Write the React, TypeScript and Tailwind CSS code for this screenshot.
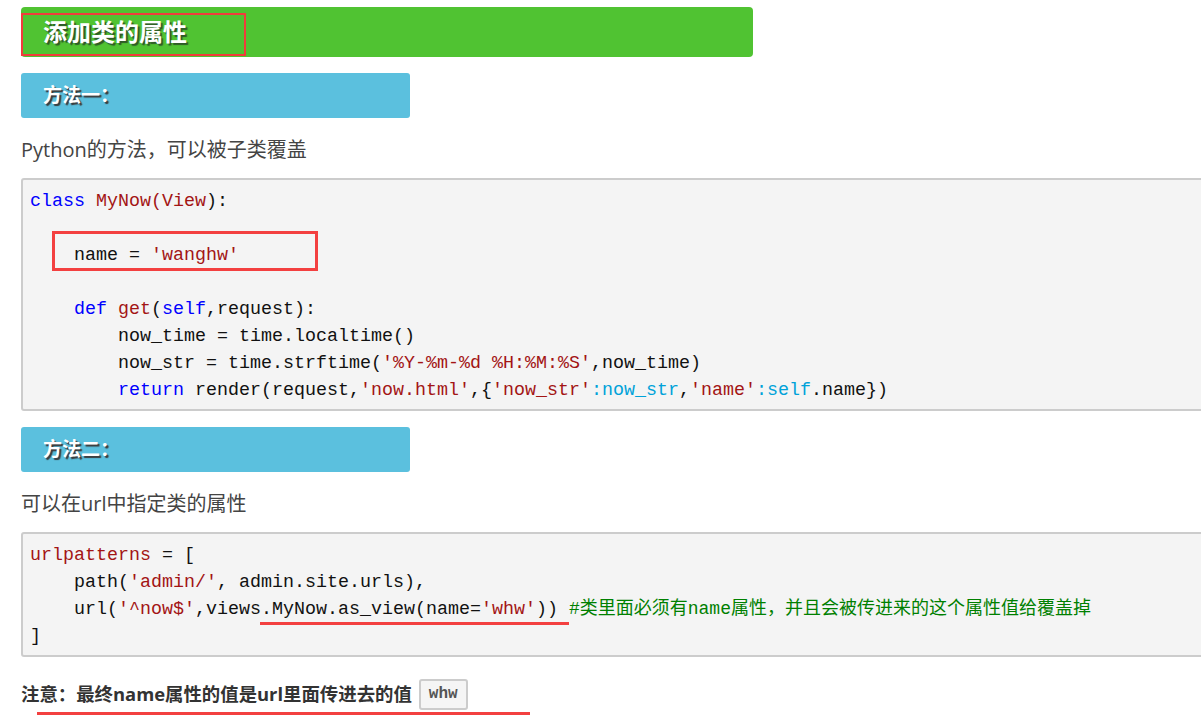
const sans = "font-['Open_Sans','Noto_Sans_CJK_SC',sans-serif]";
const mono = "font-['Liberation_Mono','Noto_Sans_CJK_SC',monospace]";

const K = ({ children }: { children: string }) => <span className="text-[#0000ff]">{children}</span>;
const S = ({ children }: { children: string }) => <span className="text-[#a31515]">{children}</span>;
const C = ({ children }: { children: string }) => <span className="text-[#00a2d9]">{children}</span>;
const G = ({ children }: { children: string }) => <span className="text-[#008000] text-[18px]">{children}</span>;

function SubHeader({ title }: { title: string }) {
  return (
    <div className="w-[389px] h-[45px] rounded-[3px] bg-[#5bc0de] flex items-center pl-[22px]">
      <span className="text-white font-bold text-[19px] [text-shadow:2px_2px_1px_#3a3a3a]">{title}</span>
    </div>
  );
}

function CodeBox({ children, className = '' }: { children: React.ReactNode; className?: string }) {
  return (
    <div
      className={`relative w-[1200px] border-2 border-[#cccccc] rounded-[3px] bg-[#f4f4f4] px-[7px] pt-[8px] pb-[5px] ${mono} text-[18.33px] leading-[27px] text-[#111] whitespace-pre ${className}`}
    >
      {children}
    </div>
  );
}

export default function App() {
  return (
    <div className="w-full min-h-[726px] overflow-hidden bg-white">
      <div className={`pl-[21px] pt-[7px] ${sans}`}>
        {/* title bar */}
        <div className="relative w-[732px] h-[50px] rounded-[4px] bg-[#50c332] flex items-center pl-[22px]">
          <span className="text-white font-bold text-[24px] [text-shadow:2px_2px_1px_#2f5a26]">添加类的属性</span>
          <div className="absolute left-0 top-[6px] w-[225px] h-[43px] border-2 border-[#f03c3c]" />
        </div>

        <div className="mt-[16px]">
          <SubHeader title="方法一：" />
        </div>

        <p className="mt-[17px] text-[20px] leading-[30px] text-[#444]">Python的方法，可以被子类覆盖</p>

        <CodeBox className="mt-[13px]">
          <div><K>class</K> <S>MyNow(View</S>):</div>
          <div> </div>
          <div>    name = <S>'wanghw'</S></div>
          <div> </div>
          <div>    <K>def</K> <S>get</S>(<K>self</K>,request):</div>
          <div>        now_time = time.localtime()</div>
          <div>        now_str = time.strftime(<S>'%Y-%m-%d %H:%M:%S'</S>,now_time)</div>
          <div>        <K>return</K> render(request,<S>'now.html'</S>,{'{'}<S>'now_str'</S><C>:now_str</C>,<S>'name'</S><C>:self</C>.name{'}'})</div>
          <div className="absolute left-[29px] top-[51px] w-[266px] h-[40px] border-[3px] border-[#f34040]" />
        </CodeBox>

        <div className="mt-[16px]">
          <SubHeader title="方法二：" />
        </div>

        <p className="mt-[17px] text-[20px] leading-[30px] text-[#444]">可以在url中指定类的属性</p>

        <CodeBox className="mt-[13px]">
          <div><S>urlpatterns</S> = [</div>
          <div>    path(<S>'admin/'</S>, admin.site.urls),</div>
          <div>    url(<S>'^now$'</S>,views.MyNow.as_view(name=<S>'whw'</S>)) <G>#类里面必须有name属性，并且会被传进来的这个属性值给覆盖掉</G></div>
          <div>]</div>
          <div className="absolute left-[237px] top-[88px] w-[309px] h-[3px] bg-[#f34040]" />
        </CodeBox>

        <div className="relative mt-[21px] flex items-center h-[32px]">
          <span className="text-[18.4px] font-bold text-[#333]">注意：最终name属性的值是url里面传进去的值</span>
          <span className={`ml-[7px] h-[31px] px-[8px] flex items-center border-2 border-[#cccccc] rounded-[3px] bg-[#f5f5f5] ${mono} text-[16px] font-bold text-[#555]`}>whw</span>
          <div className="absolute left-[16px] top-[34px] w-[493px] h-[3px] bg-[#f34040]" />
        </div>
      </div>
    </div>
  );
}
